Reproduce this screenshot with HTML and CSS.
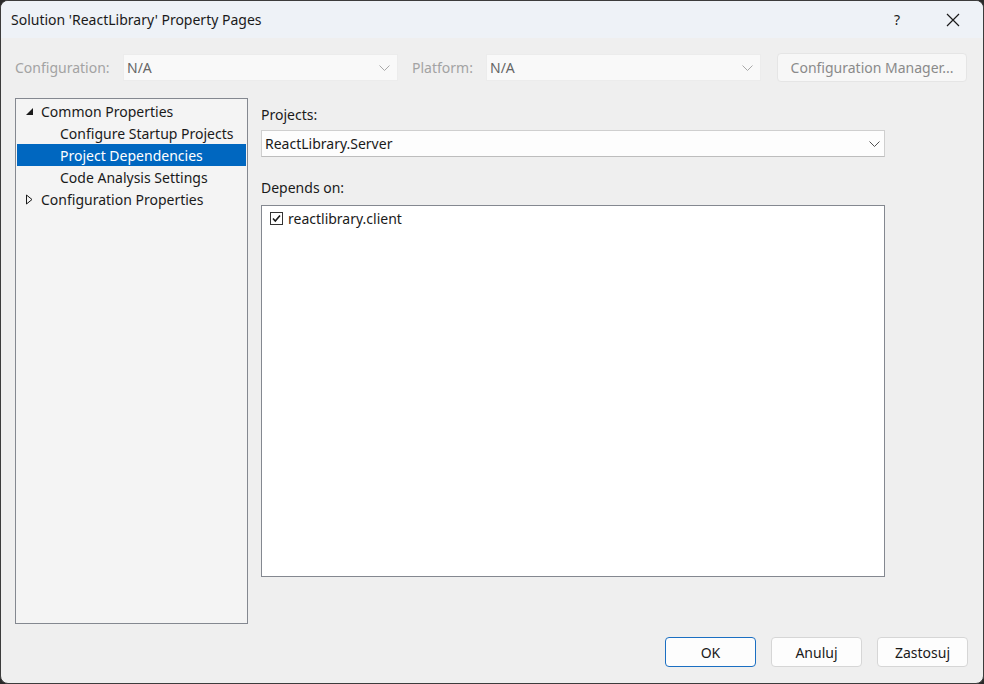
FILE: index.html
```html
<!DOCTYPE html>
<html lang="en">
<head>
<meta charset="utf-8">
<title>Solution 'ReactLibrary' Property Pages</title>
<link rel="stylesheet" href="styles.css">
</head>
<body>
<div class="window">
  <div class="titlebar">
    <div class="title">Solution 'ReactLibrary' Property Pages</div>
    <div class="title-actions">
      <span class="help">?</span>
      <svg class="close" width="14" height="14" viewBox="0 0 14 14"><path d="M1 1 L13 13 M13 1 L1 13" stroke="#1a1a1a" stroke-width="1.2" fill="none"/></svg>
    </div>
  </div>
  <div class="content">
    <div class="config-row">
      <span class="cfg-label lbl-config">Configuration:</span>
      <div class="combo combo-disabled"><span>N/A</span>
        <svg width="11" height="6" viewBox="0 0 11 6"><path d="M0.5 0.5 L5.5 5.5 L10.5 0.5" stroke="#a8a8a8" fill="none"/></svg>
      </div>
      <span class="cfg-label lbl-platform">Platform:</span>
      <div class="combo combo-disabled"><span>N/A</span>
        <svg width="11" height="6" viewBox="0 0 11 6"><path d="M0.5 0.5 L5.5 5.5 L10.5 0.5" stroke="#a8a8a8" fill="none"/></svg>
      </div>
      <div class="btn-cm">Configuration Manager...</div>
    </div>
    <div class="main">
      <div class="tree">
        <div class="row lvl0"><svg class="twisty" width="9" height="9" viewBox="0 0 9 9"><path d="M8 1 L8 8 L1 8 Z" fill="#1a1a1a"/></svg><span>Common Properties</span></div>
        <div class="row lvl1"><span>Configure Startup Projects</span></div>
        <div class="row lvl1 selected"><span>Project Dependencies</span></div>
        <div class="row lvl1"><span>Code Analysis Settings</span></div>
        <div class="row lvl0"><svg class="twisty" width="9" height="11" viewBox="0 0 9 11"><path d="M1.5 1 L7 5.5 L1.5 10 Z" fill="none" stroke="#1a1a1a" stroke-width="1"/></svg><span>Configuration Properties</span></div>
      </div>
      <div class="page">
        <div class="field-label lbl-projects">Projects:</div>
        <div class="combo combo-projects"><span>ReactLibrary.Server</span>
          <svg width="11" height="6" viewBox="0 0 11 6"><path d="M0.5 0.5 L5.5 5.5 L10.5 0.5" stroke="#505050" fill="none"/></svg>
        </div>
        <div class="field-label lbl-depends">Depends on:</div>
        <div class="listbox">
          <div class="check-row">
            <span class="checkbox"><svg width="11" height="11" viewBox="0 0 11 11"><path d="M2 5.5 L4.3 8 L9 2.5" stroke="#1a1a1a" stroke-width="1.6" fill="none"/></svg></span>
            <span>reactlibrary.client</span>
          </div>
        </div>
      </div>
    </div>
    <div class="footer">
      <div class="btn btn-default">OK</div>
      <div class="btn">Anuluj</div>
      <div class="btn">Zastosuj</div>
    </div>
  </div>
</div>
</body>
</html>
```
FILE: styles.css
```css
* { box-sizing: border-box; }
html, body { margin: 0; padding: 0; }
body {
  background: #2a2a2a;
  font-family: "Noto Sans", "Open Sans", sans-serif;
  font-size: 14px;
  color: #1a1a1a;
}
.window {
  width: 984px;
  height: 684px;
  border: 1px solid #3c3c3c;
  border-radius: 8px;
  background: #efefef;
  overflow: hidden;
  display: flex;
  flex-direction: column;
}
.titlebar {
  height: 37px;
  flex: none;
  background: #eef2f7;
  display: flex;
  align-items: center;
  justify-content: space-between;
  padding-left: 10px;
}
.title { font-size: 14px; color: #1a1a1a; }
.title-actions { display: flex; align-items: center; height: 100%; }
.help { font-size: 14px; width: 14px; text-align: center; margin-right: 42px; }
.close { margin-right: 23px; }
.content {
  flex: 1;
  display: flex;
  flex-direction: column;
  padding: 15px 15px 16px 14px;
}
.config-row {
  height: 29px;
  display: flex;
  align-items: center;
}
.cfg-label { color: #a3a3a3; }
.lbl-config { width: 108px; }
.lbl-platform { width: 74px; margin-left: 14px; }
.combo {
  height: 27px;
  display: flex;
  align-items: center;
  justify-content: space-between;
  padding: 0 7px 0 3px;
}
.combo-disabled {
  width: 275px;
  background: #f9f9f9;
  border: 1px solid #ececec;
  color: #666666;
}
.btn-cm {
  margin-left: 16px;
  width: 190px;
  height: 29px;
  border: 1px solid #e5e5e5;
  border-radius: 4px;
  background: #f7f7f7;
  color: #8a8a8a;
  display: flex;
  align-items: center;
  justify-content: center;
}
.main {
  margin-top: 16px;
  display: flex;
  gap: 13px;
  height: 526px;
}
.tree {
  width: 233px;
  border: 1px solid #848890;
  background: #f4f4f4;
  padding: 1px;
}
.row {
  height: 22px;
  display: flex;
  align-items: center;
  white-space: nowrap;
}
.lvl0 { padding-left: 8px; }
.lvl0 .twisty { width: 9px; margin-right: 7px; flex: none; }
.lvl1 { padding-left: 43px; }
.row.selected { background: #0067c0; color: #ffffff; }
.page {
  width: 624px;
  display: flex;
  flex-direction: column;
}
.field-label { height: 20px; line-height: 20px; }
.lbl-projects { margin-top: 7px; }
.combo-projects {
  margin-top: 5px;
  background: #fdfdfd;
  border: 1px solid #cfcfcf;
  border-bottom-color: #bdbdbd;
  color: #1a1a1a;
  padding-left: 3px;
  padding-right: 4px;
}
.lbl-depends { margin-top: 21px; }
.listbox {
  margin-top: 7px;
  height: 372px;
  background: #ffffff;
  border: 1px solid #848890;
  padding: 5px 8px;
}
.check-row { display: flex; align-items: center; height: 15px; }
.checkbox {
  width: 13px;
  height: 13px;
  border: 1px solid #333333;
  background: #ffffff;
  display: flex;
  align-items: center;
  justify-content: center;
  margin-right: 5px;
}
.footer {
  margin-top: auto;
  display: flex;
  justify-content: flex-end;
  gap: 15px;
}
.btn {
  width: 91px;
  height: 30px;
  border: 1px solid #d6d6d6;
  border-radius: 4px;
  background: #fdfdfd;
  display: flex;
  align-items: center;
  justify-content: center;
}
.btn-default { border-color: #1b6fc2; }
```
